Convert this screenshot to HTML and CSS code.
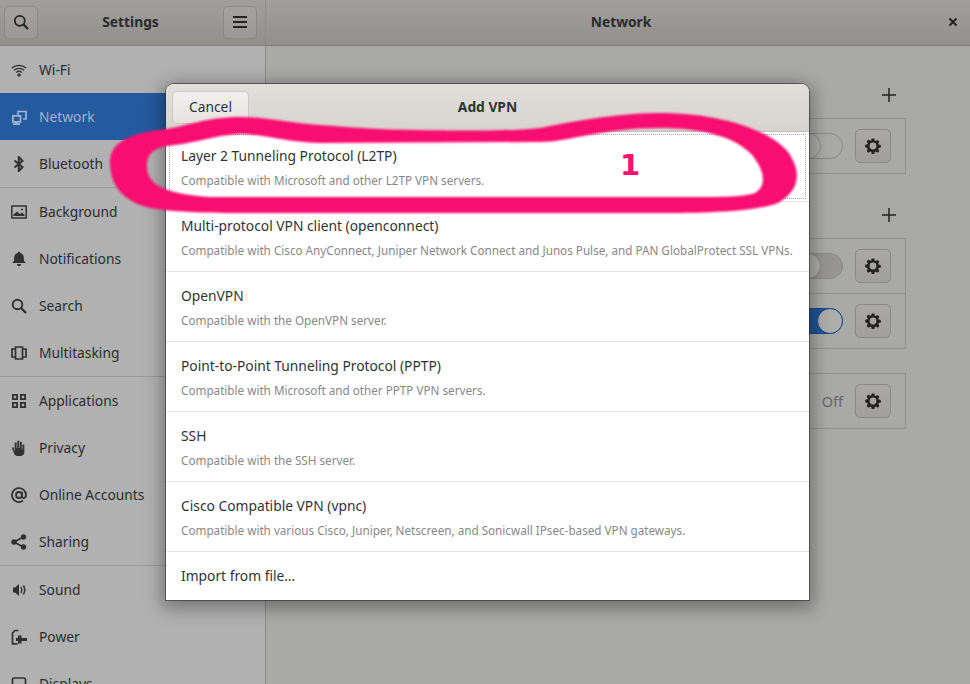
FILE: index.html
```html
<!DOCTYPE html>
<html lang="en">
<head>
<meta charset="utf-8">
<title>Settings - Network</title>
<link rel="stylesheet" href="styles.css">
</head>
<body>
<div class="window">
  <aside class="left">
    <header class="hb hb-left">
      <button class="hbtn"><svg viewBox="0 0 16 16" class="ic dark"><circle cx="6.800" cy="6.800" r="5" fill="none" stroke="currentColor" stroke-width="1.800"/><path d="M10.400 10.400 15 15" stroke="currentColor" stroke-width="2.200"/></svg></button>
      <span class="hb-title">Settings</span>
      <button class="hbtn"><svg viewBox="0 0 16 16" class="ic dark"><path d="M1 3h14M1 8h14M1 13h14" stroke="currentColor" stroke-width="1.800"/></svg></button>
    </header>
    <nav class="nav">
      <a class="item"><svg viewBox="0 0 16 16" class="ic"><path d="M.8 6C4.800 2.400 11.200 2.400 15.200 6M3 8.200c2.900-2.500 7.100-2.500 10 0M5.200 10.400c1.600-1.300 4-1.300 5.600 0" fill="none" stroke="currentColor" stroke-width="1.300"/><circle cx="8" cy="13" r="1.700" fill="currentColor"/></svg><span class="label">Wi-Fi</span></a>
      <a class="item sel"><svg viewBox="0 0 16 16" class="ic"><path d="M7 6V2.500h8v7.500h-3" fill="none" stroke="currentColor" stroke-width="1.700"/><path d="M1.900 6.900h7.600v6H1.900z" fill="none" stroke="currentColor" stroke-width="1.800"/><path d="M4 13h3v1.300h2V16H2v-1.700h2z" fill="currentColor"/></svg><span class="label">Network</span></a>
      <a class="item sep"><svg viewBox="0 0 16 16" class="ic"><path d="M3.500 4.500 11.500 11 7.800 15V1l3.700 4-8 6.500" fill="none" stroke="currentColor" stroke-width="2"/></svg><span class="label">Bluetooth</span></a>
      <a class="item"><svg viewBox="0 0 16 16" class="ic"><rect x=".8" y="2" width="14.400" height="12" fill="none" stroke="currentColor" stroke-width="1.500"/><path d="M2.500 12V10.500L6 7.500l3 2.500 2-1.500 2.500 2V12z" fill="currentColor"/><circle cx="11" cy="5.500" r="1.100" fill="currentColor"/></svg><span class="label">Background</span></a>
      <a class="item"><svg viewBox="0 0 16 16" class="ic"><path d="M8 .8c.8 0 1.200.5 1.300 1.200C11.600 2.600 12.800 4.400 12.800 7c0 3 .8 4 2.200 5H1C2.400 11 3.200 10 3.200 7c0-2.600 1.200-4.400 3.500-5C6.800 1.300 7.200.8 8 .8zM6 13h4c0 1.500-.9 2.200-2 2.200S6 14.500 6 13z" fill="currentColor"/></svg><span class="label">Notifications</span></a>
      <a class="item"><svg viewBox="0 0 16 16" class="ic"><circle cx="6.500" cy="6.500" r="4.800" fill="none" stroke="currentColor" stroke-width="1.900"/><path d="M10 10l5 5" stroke="currentColor" stroke-width="2.300"/></svg><span class="label">Search</span></a>
      <a class="item sep"><svg viewBox="0 0 16 16" class="ic"><path d="M4.500 2h7v12h-7zM4 4H1v8h3M12 4h3v8h-3" fill="none" stroke="currentColor" stroke-width="1.700"/></svg><span class="label">Multitasking</span></a>
      <a class="item"><svg viewBox="0 0 16 16" class="ic"><path d="M1 1h6v6H1zM9 1h6v6H9zM1 9h6v6H1zM9 9h6v6H9z M2.800 2.800v2.400h2.400V2.800zM10.800 2.800v2.400h2.400V2.800zM2.800 10.800v2.400h2.400v-2.400zM10.800 10.800v2.400h2.400v-2.400z" fill="currentColor" fill-rule="evenodd"/></svg><span class="label">Applications</span></a>
      <a class="item"><svg viewBox="0 0 16 16" class="ic"><path d="M.8 7.500h2.200v3h.7V2.500h1.900V8h.7V.8h1.900V8h.7V1.800h1.900v7.700h.7V4.500h1.900V12c0 2.500-2 4-4 4H6.500c-1.800 0-2.700-1-3.500-2.500z" fill="currentColor"/></svg><span class="label">Privacy</span></a>
      <a class="item"><svg viewBox="0 0 16 16" class="ic"><circle cx="8" cy="8" r="3" fill="none" stroke="currentColor" stroke-width="1.800"/><path d="M11 5v4.500c0 2.500 4 2 4-1.500a7 7 0 1 0-3 5.800" fill="none" stroke="currentColor" stroke-width="1.800"/></svg><span class="label">Online Accounts</span></a>
      <a class="item sep"><svg viewBox="0 0 16 16" class="ic"><path d="M12.500 3 3 8l9.500 5" fill="none" stroke="currentColor" stroke-width="1.800"/><circle cx="12.500" cy="3" r="2.700" fill="currentColor"/><circle cx="12.500" cy="13" r="2.700" fill="currentColor"/><circle cx="3" cy="8" r="2.700" fill="currentColor"/></svg><span class="label">Sharing</span></a>
      <a class="item"><svg viewBox="0 0 16 16" class="ic"><path d="M2 5.500h2L8 2v12l-4-3.500H2z" fill="currentColor"/><path d="M10 5c1 1.800 1 4.200 0 6M12.400 3.500c1.600 2.700 1.600 6.300 0 9" fill="none" stroke="currentColor" stroke-width="1.500"/></svg><span class="label">Sound</span></a>
      <a class="item"><svg viewBox="0 0 16 16" class="ic"><path d="M7.500 1.500H4L1.500 4v10.800h5" fill="none" stroke="currentColor" stroke-width="1.700"/><path d="M7 6.500h3.500V9H16v1.500h-1 1V12h-5.500v2.500H7V12H5V9h2z" fill="currentColor"/></svg><span class="label">Power</span></a>
      <a class="item"><svg viewBox="0 0 16 16" class="ic"><rect x="1.500" y="2" width="13" height="10" rx="1.500" fill="none" stroke="currentColor" stroke-width="1.700"/></svg><span class="label">Displays</span></a>
    </nav>
  </aside>
  <main class="right">
    <header class="hb hb-right">
      <span class="hb-title">Network</span>
      <svg viewBox="0 0 10 10" class="close"><path d="M1.500 1.500l7 7M8.500 1.500l-7 7" stroke="currentColor" stroke-width="1.900"/></svg>
    </header>
    <section class="content">
      <div class="plus-row first"><svg viewBox="0 0 16 16" class="plus"><path d="M8 1v14M1 8h14" stroke="currentColor" stroke-width="1.500"/></svg></div>
      <div class="frame">
        <div class="row"><span class="toggle"><i class="knob"></i></span><button class="gear"><svg viewBox="0 0 16 16" class="gicon"><use href="#cog"/></svg></button></div>
      </div>
      <div class="plus-row"><svg viewBox="0 0 16 16" class="plus"><path d="M8 1v14M1 8h14" stroke="currentColor" stroke-width="1.500"/></svg></div>
      <div class="frame">
        <div class="row"><span class="toggle grey"><i class="knob"></i></span><button class="gear"><svg viewBox="0 0 16 16" class="gicon"><use href="#cog"/></svg></button></div>
        <div class="row divided"><span class="toggle on"><i class="knob"></i></span><button class="gear"><svg viewBox="0 0 16 16" class="gicon"><use href="#cog"/></svg></button></div>
      </div>
      <div class="frame third">
        <div class="row"><span class="off">Off</span><button class="gear"><svg viewBox="0 0 16 16" class="gicon"><use href="#cog"/></svg></button></div>
      </div>
    </section>
  </main>
</div>

<div class="dialog">
  <header class="dlg-head">
    <button class="cancel">Cancel</button>
    <span class="dlg-title">Add VPN</span>
  </header>
  <ul class="list">
    <li class="opt focused"><b>Layer 2 Tunneling Protocol (L2TP)</b><small>Compatible with Microsoft and other L2TP VPN servers.</small></li>
    <li class="opt"><b>Multi-protocol VPN client (openconnect)</b><small>Compatible with Cisco AnyConnect, Juniper Network Connect and Junos Pulse, and PAN GlobalProtect SSL VPNs.</small></li>
    <li class="opt"><b>OpenVPN</b><small>Compatible with the OpenVPN server.</small></li>
    <li class="opt"><b>Point-to-Point Tunneling Protocol (PPTP)</b><small>Compatible with Microsoft and other PPTP VPN servers.</small></li>
    <li class="opt"><b>SSH</b><small>Compatible with the SSH server.</small></li>
    <li class="opt"><b>Cisco Compatible VPN (vpnc)</b><small>Compatible with various Cisco, Juniper, Netscreen, and Sonicwall IPsec-based VPN gateways.</small></li>
    <li class="opt last"><b>Import from file…</b></li>
  </ul>
</div>

<svg class="scribble" viewBox="0 0 970 684">
  <defs>
    <filter id="soft" x="-5%" y="-5%" width="110%" height="110%"><feGaussianBlur stdDeviation="1.300"/></filter>
    <symbol id="cog" viewBox="0 0 16 16"><path fill-rule="evenodd" fill="currentColor" d="M6.700.5h2.600l.4 2.100 1.100.5 1.800-1.200 1.800 1.800-1.200 1.800.5 1.100 2.100.4v2.600l-2.100.4-.5 1.100 1.200 1.800-1.800 1.800-1.800-1.200-1.100.5-.4 2.100H6.700l-.4-2.100-1.100-.5-1.800 1.200-1.800-1.800 1.200-1.800-.5-1.100L.2 9.300V6.700l2.100-.4.500-1.100L1.600 3.400l1.800-1.800 1.800 1.200 1.100-.5zM8 4.600a3.400 3.400 0 1 0 0 6.800 3.400 3.400 0 0 0 0-6.800z"/></symbol>
  </defs>
  <path filter="url(#soft)" fill="#f8106f" fill-rule="evenodd" d="M110 162C110 145 125 134 160 130C185 127 205 117 240 117C265 117 290 123 320 125C350 127 380 130 420 130C480 131 510 131 540 128C580 120 620 113 660 113C720 113 770 130 788 152C802 172 800 190 778 203C755 212 700 213 660 213L300 213C240 213 185 214 150 208C122 201 110 185 110 162ZM147 168C146 155 152 147 175 145C195 143 215 135 240 134C265 134 285 142 320 143L540 142C570 142 600 128 660 128C700 128 735 136 752 155C766 172 766 187 755 193C745 197 720 197 690 197L210 197C170 194 148 187 147 168Z"/>
  <text x="630" y="175" class="num">1</text>
</svg>
</body>
</html>
```

FILE: styles.css
```css
* { box-sizing: border-box; }
html, body { margin: 0; height: 684px; overflow: hidden; }
body {
  font-family: "Noto Sans", "Open Sans", sans-serif;
  font-size: 13.8px;
  color: #2b2e2e;
  background: #b0b0b0;
  position: relative;
}
.window { display: flex; height: 684px; }
.left { width: 266px; flex: none; background: #b1b1b1; border-right: 1px solid #8e8c8a; overflow: hidden; }
.right { flex: 1; background: #a9a9a7; display: flex; flex-direction: column; }
.hb {
  height: 46px;
  flex: none;
  background: linear-gradient(#a19e9b, #92908d);
  border-bottom: 1px solid #7f7d7a;
  display: flex;
  align-items: center;
}
.hb-left { justify-content: space-between; padding: 0 8px 1px 4px; }
.hb-right { position: relative; justify-content: center; padding-left: 6px; }
.hb-title { font-weight: 700; font-size: 13.8px; color: #2a2c2c; margin-bottom: 2px; }
.hbtn {
  width: 34px; height: 33px; padding: 0;
  display: flex; align-items: center; justify-content: center;
  background: linear-gradient(#a4a19e, #9b9895);
  border: 1px solid #8b8986;
  border-radius: 5px;
  color: #232525;
}
.ic { width: 16px; height: 16px; flex: none; color: #303232; }
.ic.dark { color: #232525; }
.close { position: absolute; right: 12px; top: 17px; width: 10px; height: 10px; color: #222; }
.nav { display: flex; flex-direction: column; }
.item {
  height: 47px;
  flex: none;
  display: flex;
  align-items: center;
  gap: 12px;
  padding-left: 11px;
  color: #2b2d2d;
}
.label { margin-bottom: 1px; }
.item.sel { background: #245a9e; color: #9fb3cd; }
.item.sel .ic { color: #9fb3cd; }
.item.sep { border-bottom: 1px solid #9a9a9a; height: 48px; }
.content { flex: 1; padding-left: 80px; padding-right: 64px; }
.plus-row { height: 64px; display: flex; justify-content: flex-end; align-items: flex-end; padding: 0 9px 15px 0; }
.plus-row.first { height: 72px; }
.plus { width: 16px; height: 16px; color: #222; }
.frame { border: 1px solid #8f8f8d; }
.third { margin-top: 24px; }
.row { height: 54px; display: flex; align-items: center; justify-content: flex-end; padding-right: 14px; gap: 12px; }
.row.divided { border-top: 1px solid #8f8f8d; height: 55px; }
.gear {
  width: 36px; height: 34px; padding: 0;
  display: flex; align-items: center; justify-content: center;
  background: linear-gradient(#aaa9a7, #a19f9d);
  border: 1px solid #8a8987;
  border-radius: 5px;
  color: #222;
}
.gicon { width: 16px; height: 16px; }
.toggle {
  width: 48px; height: 26px;
  border: 1px solid #8c8b89;
  border-radius: 13px;
  position: relative;
  display: block;
}
.toggle.grey { background: #969593; }
.toggle.on { background: #1f5596; border-color: #1a4a85; }
.knob {
  position: absolute; left: -1px; top: -1px;
  width: 26px; height: 26px;
  border: 1px solid #8c8b89;
  border-radius: 50%;
  background: #aeaeac;
}
.on .knob { left: auto; right: -1px; border-color: #1a4a85; }
.off { color: #666; font-size: 14.5px; margin-bottom: 1px; }

.dialog {
  position: absolute;
  left: 166px; top: 84px;
  width: 643px; height: 516px;
  background: #fff;
  border-radius: 8px 8px 0 0;
  box-shadow: 0 0 0 1px rgba(40,40,40,.55), 0 4px 18px 4px rgba(0,0,0,.35);
  display: flex;
  flex-direction: column;
  overflow: hidden;
}
.dlg-head {
  height: 48px; flex: none;
  background: linear-gradient(#e2dfdb, #d7d4ce);
  border-bottom: 1px solid #c3c0ba;
  display: flex; align-items: center; justify-content: center;
  position: relative;
}
.dlg-title { font-weight: 700; color: #2e3436; margin-bottom: 3px; }
.cancel {
  position: absolute; left: 6px; top: 7px;
  width: 77px; height: 33px;
  font: inherit; color: #2e3436;
  padding: 0 0 3px;
  background: linear-gradient(#f2f0ee, #e6e3e0);
  border: 1px solid #cdcac5;
  border-radius: 5px;
}
.list { list-style: none; margin: 0; padding: 0; flex: 1; display: flex; flex-direction: column; }
.opt {
  height: 70px; flex: none;
  padding: 12px 15px 0;
  border-bottom: 1px solid #e4e4e2;
  display: flex; flex-direction: column;
  position: relative;
}
.opt b { font-weight: 400; font-size: 13.8px; line-height: 24px; color: #2e3436; }
.opt small { font-size: 11.7px; line-height: 24px; color: #85888a; white-space: nowrap; }
.opt.last { height: 48px; border-bottom: 0; }
.focused::after {
  content: "";
  position: absolute; left: 3px; right: 3px; top: 2px; bottom: 2px;
  border: 1px dotted #a6a6a6;
}
.scribble { position: absolute; left: 0; top: 0; width: 970px; height: 684px; pointer-events: none; }
.num { font-family: "DejaVu Sans", sans-serif; font-weight: 700; font-size: 29px; fill: #f8106f; text-anchor: middle; }
```
